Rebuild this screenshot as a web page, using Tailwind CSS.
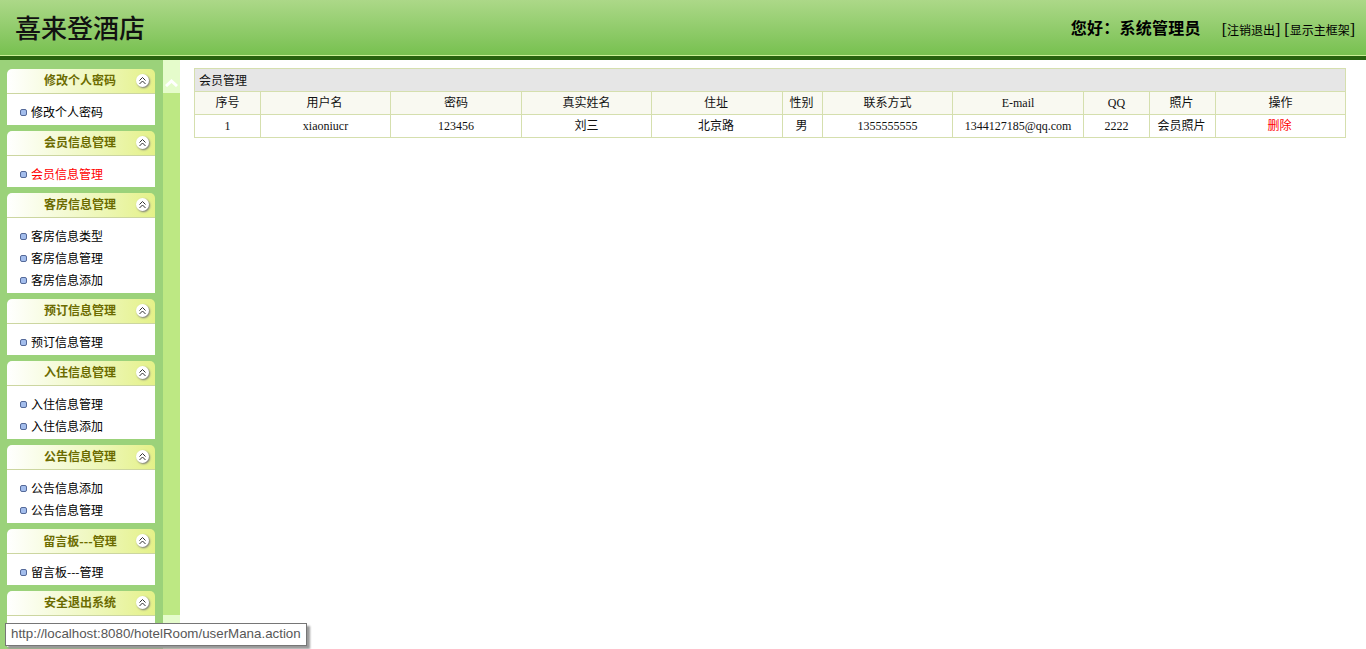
<!DOCTYPE html>
<html lang="zh-CN">
<head>
  <meta charset="UTF-8" />
  <title>喜来登酒店</title>
  <script src="https://cdn.jsdelivr.net/npm/@tailwindcss/browser@4"></script>
</head>
<body class="h-[649px] overflow-hidden bg-white text-black font-['Liberation_Serif','Noto_Sans_CJK_SC',serif] text-xs">

  <!-- HEADER -->
  <header class="h-[60px] flex items-center justify-between border-b-[4px] border-[#27620e] bg-gradient-to-b from-[#acd888] to-[#76c04e] shadow-[inset_0_-1px_0_#c8ee94] pl-[15px] pr-[11px]">
    <h1 class="pt-1 text-[26px] leading-[56px] font-medium text-[#111]">喜来登酒店</h1>
    <div class="flex items-center">
      <span class="pt-[2px] text-base font-bold tracking-[0.25px] mr-[21px]">您好：系统管理员</span>
      <a class="pt-[4px] text-base mr-[4px]">[<span class="text-xs">注销退出</span>]</a>
      <a class="pt-[4px] text-base">[<span class="text-xs">显示主框架</span>]</a>
    </div>
  </header>

  <div class="flex h-[589px]">

    <!-- SIDEBAR -->
    <aside class="w-[163px] shrink-0 h-full bg-[#9bd27a] pl-[7px] pr-2 pt-[9px] flex flex-col gap-[6px] overflow-hidden font-['Noto_Sans_CJK_SC',sans-serif]">

      <section class="shrink-0">
        <h3 class="h-[25px] relative rounded-t-[5px] border-b border-[#ccd6a0] bg-gradient-to-r from-white to-[#e4f188] text-center pr-[2px] font-bold leading-[21px] text-[#6b6b00]">修改个人密码
          <span class="absolute right-[6px] top-[5px] size-[13px] rounded-full bg-white shadow-[1px_1px_2px_#777] flex items-center justify-center"><svg width="9" height="9" viewBox="0 0 9 9" fill="none" stroke="#333" stroke-width="1"><path d="M1.5 4.5 4.5 1.5 7.5 4.5M1.5 8 4.5 5 7.5 8"/></svg></span>
        </h3>
        <ul class="bg-white pt-[7px] pb-[2px]">
          <li class="h-[22px] flex items-center pl-[13px] gap-[4px]"><i class="size-[7px] rounded-[2px] border border-[#556a99] bg-[#a3bdec]"></i>修改个人密码</li>
        </ul>
      </section>

      <section class="shrink-0">
        <h3 class="h-[25px] relative rounded-t-[5px] border-b border-[#ccd6a0] bg-gradient-to-r from-white to-[#e4f188] text-center pr-[2px] font-bold leading-[21px] text-[#6b6b00]">会员信息管理
          <span class="absolute right-[6px] top-[5px] size-[13px] rounded-full bg-white shadow-[1px_1px_2px_#777] flex items-center justify-center"><svg width="9" height="9" viewBox="0 0 9 9" fill="none" stroke="#333" stroke-width="1"><path d="M1.5 4.5 4.5 1.5 7.5 4.5M1.5 8 4.5 5 7.5 8"/></svg></span>
        </h3>
        <ul class="bg-white pt-[7px] pb-[2px]">
          <li class="h-[22px] flex items-center pl-[13px] gap-[4px] text-[#f00]"><i class="size-[7px] rounded-[2px] border border-[#556a99] bg-[#a3bdec]"></i>会员信息管理</li>
        </ul>
      </section>

      <section class="shrink-0">
        <h3 class="h-[25px] relative rounded-t-[5px] border-b border-[#ccd6a0] bg-gradient-to-r from-white to-[#e4f188] text-center pr-[2px] font-bold leading-[21px] text-[#6b6b00]">客房信息管理
          <span class="absolute right-[6px] top-[5px] size-[13px] rounded-full bg-white shadow-[1px_1px_2px_#777] flex items-center justify-center"><svg width="9" height="9" viewBox="0 0 9 9" fill="none" stroke="#333" stroke-width="1"><path d="M1.5 4.5 4.5 1.5 7.5 4.5M1.5 8 4.5 5 7.5 8"/></svg></span>
        </h3>
        <ul class="bg-white pt-[7px] pb-[2px]">
          <li class="h-[22px] flex items-center pl-[13px] gap-[4px]"><i class="size-[7px] rounded-[2px] border border-[#556a99] bg-[#a3bdec]"></i>客房信息类型</li>
          <li class="h-[22px] flex items-center pl-[13px] gap-[4px]"><i class="size-[7px] rounded-[2px] border border-[#556a99] bg-[#a3bdec]"></i>客房信息管理</li>
          <li class="h-[22px] flex items-center pl-[13px] gap-[4px]"><i class="size-[7px] rounded-[2px] border border-[#556a99] bg-[#a3bdec]"></i>客房信息添加</li>
        </ul>
      </section>

      <section class="shrink-0">
        <h3 class="h-[25px] relative rounded-t-[5px] border-b border-[#ccd6a0] bg-gradient-to-r from-white to-[#e4f188] text-center pr-[2px] font-bold leading-[21px] text-[#6b6b00]">预订信息管理
          <span class="absolute right-[6px] top-[5px] size-[13px] rounded-full bg-white shadow-[1px_1px_2px_#777] flex items-center justify-center"><svg width="9" height="9" viewBox="0 0 9 9" fill="none" stroke="#333" stroke-width="1"><path d="M1.5 4.5 4.5 1.5 7.5 4.5M1.5 8 4.5 5 7.5 8"/></svg></span>
        </h3>
        <ul class="bg-white pt-[7px] pb-[2px]">
          <li class="h-[22px] flex items-center pl-[13px] gap-[4px]"><i class="size-[7px] rounded-[2px] border border-[#556a99] bg-[#a3bdec]"></i>预订信息管理</li>
        </ul>
      </section>

      <section class="shrink-0">
        <h3 class="h-[25px] relative rounded-t-[5px] border-b border-[#ccd6a0] bg-gradient-to-r from-white to-[#e4f188] text-center pr-[2px] font-bold leading-[21px] text-[#6b6b00]">入住信息管理
          <span class="absolute right-[6px] top-[5px] size-[13px] rounded-full bg-white shadow-[1px_1px_2px_#777] flex items-center justify-center"><svg width="9" height="9" viewBox="0 0 9 9" fill="none" stroke="#333" stroke-width="1"><path d="M1.5 4.5 4.5 1.5 7.5 4.5M1.5 8 4.5 5 7.5 8"/></svg></span>
        </h3>
        <ul class="bg-white pt-[7px] pb-[2px]">
          <li class="h-[22px] flex items-center pl-[13px] gap-[4px]"><i class="size-[7px] rounded-[2px] border border-[#556a99] bg-[#a3bdec]"></i>入住信息管理</li>
          <li class="h-[22px] flex items-center pl-[13px] gap-[4px]"><i class="size-[7px] rounded-[2px] border border-[#556a99] bg-[#a3bdec]"></i>入住信息添加</li>
        </ul>
      </section>

      <section class="shrink-0">
        <h3 class="h-[25px] relative rounded-t-[5px] border-b border-[#ccd6a0] bg-gradient-to-r from-white to-[#e4f188] text-center pr-[2px] font-bold leading-[21px] text-[#6b6b00]">公告信息管理
          <span class="absolute right-[6px] top-[5px] size-[13px] rounded-full bg-white shadow-[1px_1px_2px_#777] flex items-center justify-center"><svg width="9" height="9" viewBox="0 0 9 9" fill="none" stroke="#333" stroke-width="1"><path d="M1.5 4.5 4.5 1.5 7.5 4.5M1.5 8 4.5 5 7.5 8"/></svg></span>
        </h3>
        <ul class="bg-white pt-[7px] pb-[2px]">
          <li class="h-[22px] flex items-center pl-[13px] gap-[4px]"><i class="size-[7px] rounded-[2px] border border-[#556a99] bg-[#a3bdec]"></i>公告信息添加</li>
          <li class="h-[22px] flex items-center pl-[13px] gap-[4px]"><i class="size-[7px] rounded-[2px] border border-[#556a99] bg-[#a3bdec]"></i>公告信息管理</li>
        </ul>
      </section>

      <section class="shrink-0">
        <h3 class="h-[25px] relative rounded-t-[5px] border-b border-[#ccd6a0] bg-gradient-to-r from-white to-[#e4f188] text-center pr-[2px] font-bold leading-[23px] text-[#6b6b00]">留言板---管理
          <span class="absolute right-[6px] top-[5px] size-[13px] rounded-full bg-white shadow-[1px_1px_2px_#777] flex items-center justify-center"><svg width="9" height="9" viewBox="0 0 9 9" fill="none" stroke="#333" stroke-width="1"><path d="M1.5 4.5 4.5 1.5 7.5 4.5M1.5 8 4.5 5 7.5 8"/></svg></span>
        </h3>
        <ul class="bg-white pt-[7px] pb-[2px]">
          <li class="h-[22px] flex items-center pl-[13px] gap-[4px]"><i class="size-[7px] rounded-[2px] border border-[#556a99] bg-[#a3bdec]"></i>留言板---管理</li>
        </ul>
      </section>

      <section class="shrink-0">
        <h3 class="h-[25px] relative rounded-t-[5px] border-b border-[#ccd6a0] bg-gradient-to-r from-white to-[#e4f188] text-center pr-[2px] font-bold leading-[21px] text-[#6b6b00]">安全退出系统
          <span class="absolute right-[6px] top-[5px] size-[13px] rounded-full bg-white shadow-[1px_1px_2px_#777] flex items-center justify-center"><svg width="9" height="9" viewBox="0 0 9 9" fill="none" stroke="#333" stroke-width="1"><path d="M1.5 4.5 4.5 1.5 7.5 4.5M1.5 8 4.5 5 7.5 8"/></svg></span>
        </h3>
        <!-- the only link here sits under the status tooltip -->
        <ul class="bg-white pt-[7px] pb-[2px]">
          <li class="h-[22px] flex items-center pl-[13px] gap-[4px]"><i class="size-[7px] rounded-[2px] border border-[#556a99] bg-[#a3bdec]"></i></li>
        </ul>
      </section>
    </aside>

    <!-- SCROLL STRIP -->
    <div class="w-[17px] shrink-0 h-full bg-[#bde883] flex flex-col justify-between">
      <div class="h-[33px] bg-[#e5fccb] flex items-center justify-center pt-[11px]">
        <svg width="13" height="9" viewBox="0 0 13 9" fill="none" stroke="#fff" stroke-width="3"><path d="M1 8 6.5 3 12 8"/></svg>
      </div>
      <div class="h-[34px] bg-[#e5fccb]"></div>
    </div>

    <!-- MAIN -->
    <main class="flex-1 pt-2 pl-[14px] pr-5">
      <table class="w-[1151px] table-fixed border-collapse text-center leading-[14px] text-[#111]">
        <colgroup>
          <col class="w-[66px]" /><col class="w-[130px]" /><col class="w-[131px]" /><col class="w-[130px]" /><col class="w-[131px]" />
          <col class="w-[40px]" /><col class="w-[130px]" /><col class="w-[131px]" /><col class="w-[66px]" /><col class="w-[66px]" /><col class="w-[130px]" />
        </colgroup>
        <thead>
          <tr class="h-[23px] bg-[#e6e6e6]">
            <th colspan="11" class="border border-[#d5dfae] pl-1 pt-[2px] text-left font-normal">会员管理</th>
          </tr>
          <tr class="h-[23px] bg-[#f9f9f1]">
            <th class="border border-[#d5dfae] font-normal">序号</th>
            <th class="border border-[#d5dfae] pr-[2px] font-normal">用户名</th>
            <th class="border border-[#d5dfae] font-normal">密码</th>
            <th class="border border-[#d5dfae] font-normal">真实姓名</th>
            <th class="border border-[#d5dfae] pr-[2px] font-normal">住址</th>
            <th class="border border-[#d5dfae] pr-[2px] font-normal">性别</th>
            <th class="border border-[#d5dfae] font-normal">联系方式</th>
            <th class="border border-[#d5dfae] font-normal">E-mail</th>
            <th class="border border-[#d5dfae] font-normal">QQ</th>
            <th class="border border-[#d5dfae] pr-[2px] font-normal">照片</th>
            <th class="border border-[#d5dfae] font-normal">操作</th>
          </tr>
        </thead>
        <tbody>
          <tr class="h-[23px] bg-white">
            <td class="border border-[#d5dfae]">1</td>
            <td class="border border-[#d5dfae]">xiaoniucr</td>
            <td class="border border-[#d5dfae]">123456</td>
            <td class="border border-[#d5dfae]">刘三</td>
            <td class="border border-[#d5dfae] pr-[2px]">北京路</td>
            <td class="border border-[#d5dfae] pr-[2px]">男</td>
            <td class="border border-[#d5dfae]">1355555555</td>
            <td class="border border-[#d5dfae]">1344127185@qq.com</td>
            <td class="border border-[#d5dfae]">2222</td>
            <td class="border border-[#d5dfae] pr-[2px]">会员照片</td>
            <td class="border border-[#d5dfae] pr-[2px] text-[#f00]">删除</td>
          </tr>
        </tbody>
      </table>
    </main>
  </div>

  <!-- status tooltip -->
  <div class="absolute left-[5px] top-[623px] h-[23px] w-[302px] border border-[#767676] bg-white pl-[5px] font-['Liberation_Sans',sans-serif] text-[13.33px] leading-[19px] text-[#575757] shadow-[3px_3px_2px_#999]">http://localhost:8080/hotelRoom/userMana.action</div>

</body>
</html>
